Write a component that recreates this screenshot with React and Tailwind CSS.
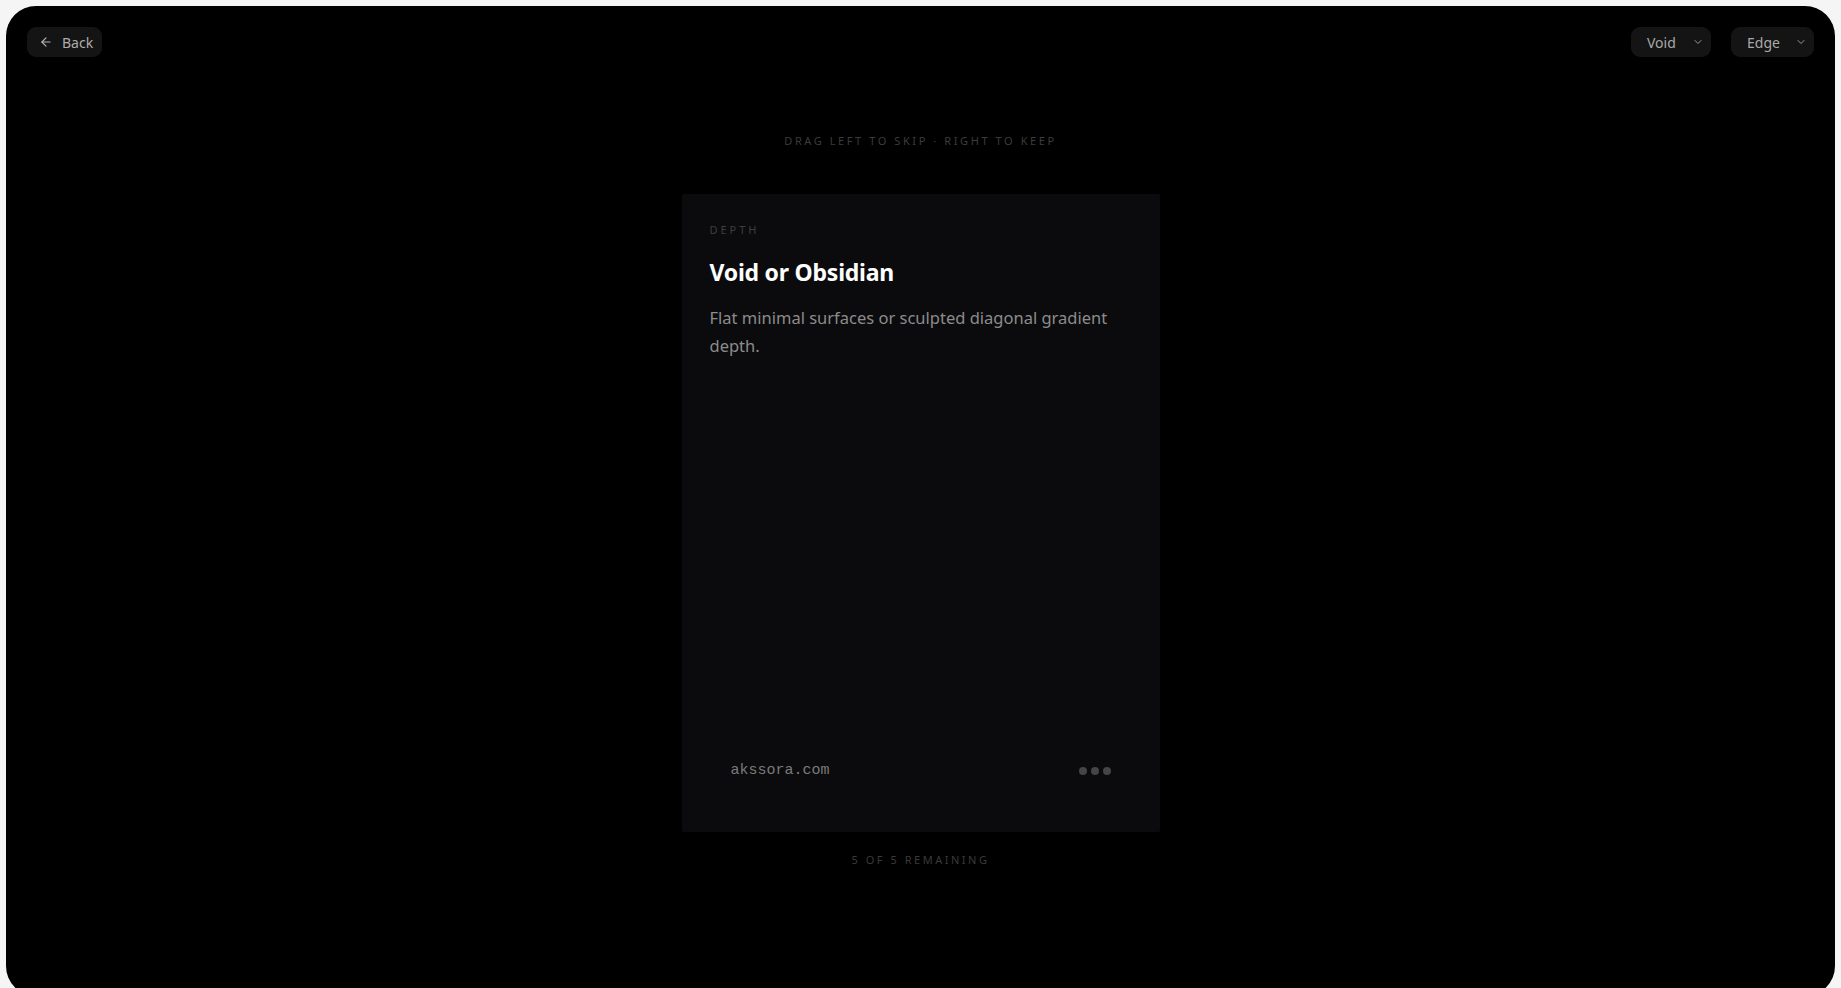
import React from "react";
import { ArrowLeft, ChevronDown } from "lucide-react";

const sans = { fontFamily: '"Noto Sans", "Open Sans", sans-serif' };

function Select({ label, width }) {
  return (
    <button
      className={`flex h-[30px] items-center justify-between rounded-[9px] bg-[#141414] pl-[16px] pr-[7px] text-[14px] text-[#a9a9a9] ${width}`}
    >
      <span>{label}</span>
      <ChevronDown size={12} strokeWidth={2} className="text-[#9a9a9a]" />
    </button>
  );
}

export default function App() {
  return (
    <div className="h-screen overflow-hidden bg-[#f5f5f5] px-[6px] pt-[6px]" style={sans}>
      <div className="flex h-[990px] flex-col rounded-[30px] bg-black px-[21px] pt-[21px]">
        <header className="flex h-[30px] items-center justify-between">
          <button className="flex h-[30px] w-[75px] items-center gap-[9px] rounded-[9px] bg-[#141414] pl-[12px] text-[14px] text-[#acacac]">
            <ArrowLeft size={14} strokeWidth={2} className="text-[#b5b5b5]" />
            <span>Back</span>
          </button>
          <div className="flex items-center gap-[20px]">
            <Select label="Void" width="w-[80px]" />
            <Select label="Edge" width="w-[83px]" />
          </div>
        </header>

        <main className="flex flex-col items-center">
          <p className="mt-[76px] text-[11px] leading-[16px] tracking-[0.235em] text-[#3c3c3c]">
            DRAG LEFT TO SKIP · RIGHT TO KEEP
          </p>

          <div className="mt-[45px] flex h-[638px] w-[478px] flex-col rounded-[2px] bg-[#0b0b0d] p-7">
            <p className="text-[11px] leading-[16px] tracking-[0.27em] text-[#3e3e3e]">DEPTH</p>
            <h1 className="mt-[18px] text-[23px] font-bold leading-[32px] tracking-[-0.01em] text-white">
              Void or Obsidian
            </h1>
            <p className="mt-4 text-[16.5px] leading-[28px] text-[#8c8c8c]">
              Flat minimal surfaces or sculpted diagonal gradient depth.
            </p>
            <div className="mt-auto flex items-center justify-between px-[21px] py-[23px]">
              <span
                className="text-[15px] leading-[20px] text-[#7a7a7a]"
                style={{ fontFamily: '"Liberation Mono", monospace' }}
              >
                akssora.com
              </span>
              <div className="flex items-center gap-[4px]">
                <span className="h-[8px] w-[8px] rounded-full bg-[#454547]" />
                <span className="h-[8px] w-[8px] rounded-full bg-[#454547]" />
                <span className="h-[8px] w-[8px] rounded-full bg-[#454547]" />
              </div>
            </div>
          </div>

          <p className="mt-[20px] text-[11px] leading-[16px] tracking-[0.23em] text-[#3a3a3a]">
            5 OF 5 REMAINING
          </p>
        </main>
      </div>
    </div>
  );
}
